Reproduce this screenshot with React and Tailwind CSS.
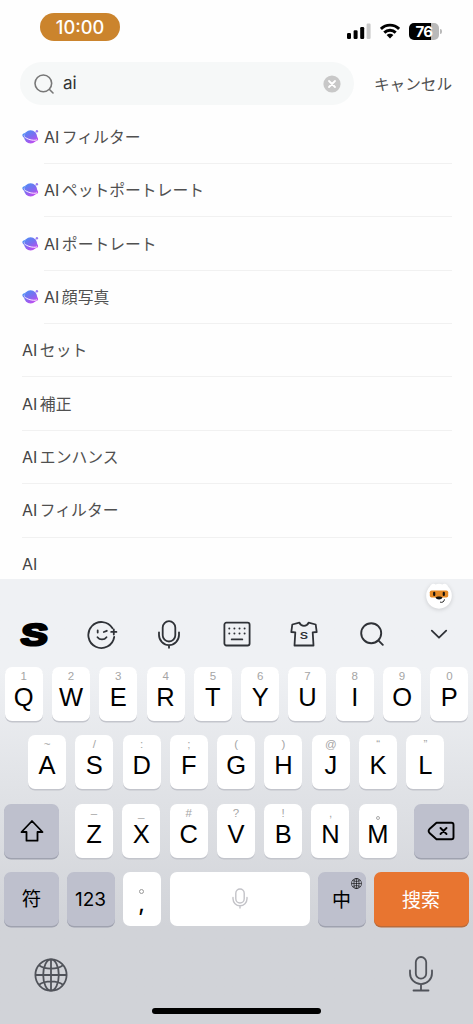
import React from 'react';

const suggestions = [
  { text: 'フィルター', planet: true },
  { text: 'ペットポートレート', planet: true },
  { text: 'ポートレート', planet: true },
  { text: '顔写真', planet: true },
  { text: 'セット' },
  { text: '補正' },
  { text: 'エンハンス' },
  { text: 'フィルター' },
  { text: '' },
];

const topRow = [
  ['Q', '1'], ['W', '2'], ['E', '3'], ['R', '4'], ['T', '5'],
  ['Y', '6'], ['U', '7'], ['I', '8'], ['O', '9'], ['P', '0'],
];
const homeRow = [
  ['A', '~'], ['S', '/'], ['D', ':'], ['F', ';'], ['G', '('],
  ['H', ')'], ['J', '@'], ['K', '“'], ['L', '”'],
];
const bottomRow = [
  ['Z', '–'], ['X', '_'], ['C', '#'], ['V', '?'], ['B', '!'], ['N', ','], ['M', '。'],
];

const Planet = () => (
  <svg className="w-[17px] h-4 shrink-0" viewBox="0 0 17 16">
    <defs>
      <linearGradient id="planet" x1="0.2" y1="0" x2="0.75" y2="1">
        <stop offset="0" stopColor="#4f8df5" />
        <stop offset="0.5" stopColor="#7c6cf0" />
        <stop offset="1" stopColor="#c44df0" />
      </linearGradient>
    </defs>
    <circle cx="8.6" cy="7.8" r="6.6" fill="url(#planet)" />
    <path d="M3 4.8C.6 5.300.4 6.500 2.100 8c2.900 2.600 9 4.200 12.300 3.300 1.400-.5 1.200-1.600.2-2.800" fill="none" stroke="url(#planet)" strokeWidth="1.400" />
    <path d="M2.200 7.600c2.800 2.700 8.600 4.300 12.600 3.400" fill="none" stroke="#fff" strokeWidth="0.9" />
    <circle cx="14.9" cy="2.2" r="1.2" fill="#9a7cf0" />
  </svg>
);

const SearchIcon = ({ className }) => (
  <svg className={className} viewBox="0 0 24 24" fill="none" stroke="currentColor" strokeWidth="1.9" strokeLinecap="round">
    <circle cx="11.2" cy="11.2" r="10" />
    <path d="m18.6 18.6 4.200 4.200" />
  </svg>
);

const StatusBar = () => (
  <div className="h-[54px] shrink-0 flex items-start justify-between pl-10 pr-[31px] pt-[13px]">
    <div className="w-20 h-7 rounded-full bg-[#cb842d] text-white text-[18.2px] leading-7 text-center font-medium">10:00</div>
    <div className="flex items-center h-4 mt-[10px]">
      <svg className="w-6 h-4" viewBox="0 0 24 16">
        <rect x="0" y="10" width="4" height="6" rx="1.2" />
        <rect x="6.6" y="7.3" width="4" height="8.7" rx="1.2" />
        <rect x="13.2" y="4" width="4" height="12" rx="1.2" />
        <rect x="19.6" y="0.5" width="4" height="15.5" rx="1.2" fill="#c9c9c9" />
      </svg>
      <svg className="w-5 h-4 ml-[9px]" viewBox="0 0 20 16">
        <g fill="none" stroke="#000" strokeWidth="2.9">
          <path d="M.9 6C6 .8 14 .8 19.1 6" />
          <path d="M4.3 9.6c3.2-3.2 8.2-3.2 11.4 0" />
        </g>
        <path d="M6.6 12.1c1.9-1.8 4.9-1.8 6.8 0L10 15.6Z" />
      </svg>
      <div className="ml-[9px] w-[30px] h-[17px] rounded-[5px] bg-linear-to-r from-black from-75% to-[#b9b9b9] to-75% text-white text-[15px] leading-[17px] font-bold text-center tracking-[-0.5px]">76</div>
      <div className="ml-px w-[2px] h-[5px] rounded-r-full bg-[#b9b9b9]" />
    </div>
  </div>
);

const SearchBar = () => (
  <div className="h-14 shrink-0 flex items-start pt-2 pl-5">
    <div className="w-[334px] h-[43px] rounded-full bg-[#f6f8f8] flex items-center pl-[14px] pr-[13px]">
      <SearchIcon className="w-5 h-5 text-[#777]" />
      <span className="ml-[9px] pt-px text-[17px] text-[#333]">ai</span>
      <svg className="w-[18px] h-[18px] ml-auto" viewBox="0 0 18 18">
        <circle cx="9" cy="9" r="8.6" fill="#c8c8c8" />
        <path d="m6 6 6 6m0-6-6 6" stroke="#fff" strokeWidth="1.8" strokeLinecap="round" />
      </svg>
    </div>
    <span className="ml-5 pt-px text-[15.6px] leading-[43px] text-[#505050] whitespace-nowrap">キャンセル</span>
  </div>
);

const Suggestion = ({ text, planet }) => (
  <div className="h-[53.4px] shrink-0 flex items-center pl-[22px] pr-[21px]">
    {planet && <div className="w-[22px] shrink-0"><Planet /></div>}
    <div className="flex-1 h-full border-b border-[#f1f1f1] flex items-center text-[#444]">
      <div className="flex items-baseline pt-px">
        <span className="text-base">AI</span>
        <span className="ml-[2.5px] text-[15.8px] text-[#505050]">{text}</span>
      </div>
    </div>
  </div>
);

const Key = ({ letter, hint }) => (
  <div className="w-[38px] h-[54px] rounded-[7px] bg-white shadow-[0_1.5px_0_#c3c5cc] flex flex-col items-center font-['Liberation_Sans',sans-serif]">
    <span className="h-[17px] pt-px text-[11.5px] leading-[17px] text-[#a5a5a5]">
      {hint === '。' ? <span className="block mt-[11px] w-1 h-1 rounded-full border border-[#aaa]" /> : hint}
    </span>
    <span className="text-[25.5px] leading-[27px] text-black">{letter}</span>
  </div>
);

const KeyRow = ({ keys }) => (
  <div className="flex gap-[9.3px]">
    {keys.map(([letter, hint]) => <Key key={letter} letter={letter} hint={hint} />)}
  </div>
);

const SpecialKey = ({ className, children }) => (
  <div className={`h-[54.5px] rounded-[7px] bg-[#bec0cd] shadow-[0_1.5px_0_#9fa2af] flex items-center justify-center text-black ${className}`}>
    {children}
  </div>
);

const Globe = ({ className }) => (
  <svg className={className} viewBox="0 0 34 34" fill="none" stroke="currentColor" strokeWidth="1.8">
    <circle cx="17" cy="17" r="15.6" />
    <ellipse cx="17" cy="17" rx="7.8" ry="15.6" />
    <path d="M17 1.4v31.2M1.4 17h31.2M5 7.2c6 4.5 18 4.5 24 0M5 26.8c6-4.5 18-4.5 24 0" />
  </svg>
);

const Toolbar = () => (
  <div className="h-[54px] flex items-center justify-between pl-[17px] pr-[17px] text-[#2f3237]">
    <svg className="w-[34px] h-8 overflow-visible" viewBox="0 0 34 32">
      <text
        transform="translate(16.500 27.2) skewX(-6) scale(1.34 1)"
        textAnchor="middle"
        fontFamily="Liberation Sans"
        fontWeight="700"
        fontSize="30"
        fill="#000"
        stroke="#000"
        strokeWidth="2.6"
        strokeLinejoin="round"
      >
        S
      </text>
    </svg>
    <svg className="w-[34px] h-8" viewBox="0 0 34 32" fill="none" stroke="currentColor" strokeWidth="1.8" strokeLinecap="round">
      <path d="M27.5 10.3A13 13 0 1 0 29.2 19" />
      <path d="M28.8 11.3v5.2M26.2 13.9h5.2M12.7 12.4v2.2M18.8 14l3-1.2M12.500 19.2c2.200 3 6.800 3 9 0" />
    </svg>
    <svg className="w-[34px] h-8" viewBox="0 0 34 32" fill="none" stroke="currentColor" strokeWidth="1.8" strokeLinecap="round">
      <rect x="10.7" y="3.2" width="12.6" height="20.3" rx="6.3" />
      <path d="M7 14.3v2.8a10 10 0 0 0 20 0v-2.8M17 27.3v2.5" />
    </svg>
    <svg className="w-[34px] h-8" viewBox="0 0 34 32" fill="none" stroke="currentColor" strokeWidth="1.8" strokeLinecap="round">
      <rect x="4.4" y="4.7" width="25.2" height="22.8" rx="2" />
      <path d="M11.7 21.4h10.6" />
      <path d="M9.3 10.6h.01M14.4 10.6h.01M19.5 10.6h.01M24.6 10.6h.01M9.3 15.6h.01M14.4 15.6h.01M19.5 15.6h.01M24.6 15.6h.01" strokeWidth="2" />
    </svg>
    <svg className="w-[34px] h-8" viewBox="0 0 34 32" fill="none" stroke="currentColor" strokeWidth="1.8" strokeLinejoin="round">
      <path d="M12.4 4.7 5.3 6.5 4.3 14l4 .3-.8 13.2h19l-.8-13.2 4-.3-1-7.5-7.1-1.8c-1.7 4.3-7.5 4.3-9.2 0Z" />
      <text
        transform="translate(17 20.7) scale(1.35 1)"
        textAnchor="middle"
        fontFamily="Inter"
        fontWeight="600"
        fontSize="9.5"
        fill="currentColor"
        stroke="none"
      >
        S
      </text>
    </svg>
    <div className="w-[34px] flex justify-center">
      <SearchIcon className="w-6 h-6" />
    </div>
    <svg className="w-[34px] h-8" viewBox="0 0 34 32" fill="none" stroke="currentColor" strokeWidth="1.8" strokeLinecap="round" strokeLinejoin="round">
      <path d="m9.8 12.7 7.2 7 7.2-7" />
    </svg>
  </div>
);

const Mascot = () => (
  <svg className="w-[26px] h-[28px] drop-shadow-sm" viewBox="0 0 26 28">
    <path d="M4 4.5C5 1.5 8 1 9.5 2.5c2-1 5-1 7 0C18 1 21 1.5 22 4.5c5 4.5 5 13 .5 18a13 13 0 0 1-19 0c-4.5-5-4.5-13.5.5-18Z" fill="#fff" />
    <rect x="3.8" y="8.5" width="18.4" height="7" rx="1.8" fill="#e58a26" />
    <path d="M8.2 10.800v2.200M17.800 10.800v2.200" stroke="#15100c" strokeWidth="2.200" strokeLinecap="round" />
    <path d="M9.500 15.300c1.700-1.200 5.300-1.200 7 0-.8 3-6.200 3-7 0Z" fill="#111" />
    <path d="M14.400 20.200c2 .7 3.600-.3 4-2.500" fill="none" stroke="#222" strokeWidth="1" strokeLinecap="round" />
  </svg>
);

const Keyboard = () => (
  <div className="flex-1 flex flex-col bg-linear-to-b from-[#eff1f4] from-20% via-[#e0e2e6] via-48% to-[#d1d3d8] to-78%">
    <div className="h-[28px] flex justify-end pr-[21px] pt-[3px]"><Mascot /></div>
    <Toolbar />
    <div className="pt-[6.5px] flex flex-col gap-[14.4px]">
      <div className="pl-[4.7px]"><KeyRow keys={topRow} /></div>
      <div className="pl-7"><KeyRow keys={homeRow} /></div>
      <div className="flex pl-1">
        <SpecialKey className="w-[55px] mr-4">
          <svg className="w-6 h-6" viewBox="0 0 24 24" fill="none" stroke="currentColor" strokeWidth="1.8" strokeLinejoin="round">
            <path d="M12 2 1.5 13h5v8.7h11V13h5Z" />
          </svg>
        </SpecialKey>
        <KeyRow keys={bottomRow} />
        <SpecialKey className="w-[55px] ml-[17px]">
          <svg className="w-7 h-6" viewBox="0 0 28 24" fill="none" stroke="currentColor" strokeWidth="1.9" strokeLinejoin="round" strokeLinecap="round">
            <path d="M9.5 3.8h15a2 2 0 0 1 2 2v12.4a2 2 0 0 1-2 2h-15L2.5 14q-1.7-2 0-4Z" />
            <path d="m13.5 9 6 6m0-6-6 6" />
          </svg>
        </SpecialKey>
      </div>
      <div className="flex pl-1 -mt-px">
        <SpecialKey className="w-[55px] pt-[2px] text-[19.5px]">符</SpecialKey>
        <SpecialKey className="w-12 ml-[7.5px] pt-[2px] text-[19px]">123</SpecialKey>
        <div className="w-[38px] h-[54px] ml-2 rounded-[7px] bg-white flex flex-col items-center">
          <span className="mt-[17px] w-[5px] h-[5px] rounded-full border border-[#999]" />
          <span className="text-[22px] leading-[18px] font-medium">,</span>
        </div>
        <div className="w-[140px] h-[54px] ml-[9px] rounded-[7px] bg-white flex items-center justify-center">
          <svg className="w-4 h-[21px]" viewBox="0 0 16 21" fill="none" stroke="#c3c3c8" strokeWidth="1.4" strokeLinecap="round">
            <rect x="3.8" y="1" width="8.4" height="14" rx="4.2" />
            <path d="M1 9.5v1.3a7 7 0 0 0 14 0V9.5M8 18v2" />
          </svg>
        </div>
        <SpecialKey className="w-12 ml-2 pt-[4px] text-[19px] relative">
          中
          <Globe className="absolute top-[6px] right-1 w-[11px] h-[11px]" />
        </SpecialKey>
        <div className="w-[95px] h-[54.5px] ml-2 pt-[4px] rounded-[7px] bg-[#e87530] shadow-[0_1.5px_0_#b96b3b] text-white text-[19px] flex items-center justify-center">搜索</div>
      </div>
    </div>
    <div className="flex items-start justify-between pl-[34px] pr-10 pt-[30px] text-[#50535a]">
      <Globe className="w-[34px] h-[34px] mt-[2px]" />
      <svg className="w-6 h-9" viewBox="0 0 24 36" fill="none" stroke="currentColor" strokeWidth="1.8" strokeLinecap="round">
        <rect x="6.8" y="1" width="10.4" height="21.6" rx="5.2" />
        <path d="M1 14.5v2.7a11 11 0 0 0 22 0v-2.7M12 28.5V34M4.5 34.5h15" />
      </svg>
    </div>
    <div className="mt-auto mb-[10px] w-[169px] h-[6px] rounded-full bg-black self-center" />
  </div>
);

const App = () => (
  <div className="w-[473px] h-[1024px] overflow-hidden bg-[#fefefe] flex flex-col font-['Inter','Noto_Sans_CJK_JP',sans-serif]">
    <StatusBar />
    <SearchBar />
    <div className="h-[468.5px] pt-[0.4px] shrink-0 overflow-hidden flex flex-col">
      {suggestions.map((s, i) => <Suggestion key={i} text={s.text} planet={s.planet} />)}
    </div>
    <Keyboard />
  </div>
);

export default App;
